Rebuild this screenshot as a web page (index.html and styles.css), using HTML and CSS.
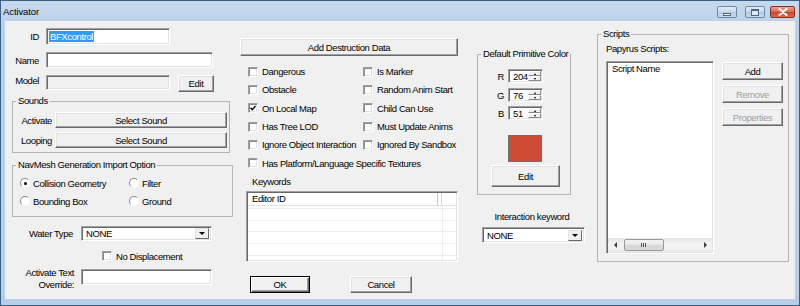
FILE: index.html
```html
<!DOCTYPE html>
<html>
<head>
<meta charset="utf-8">
<title>Activator</title>
<link rel="stylesheet" href="styles.css">
</head>
<body>
<div class="window">
  <div class="titlebar">
    <span class="title">Activator</span>
    <div class="caption">
      <span class="cbtn cmin"><span class="g-min"></span></span>
      <span class="cbtn cmax"><span class="g-max"></span></span>
      <span class="cbtn cclose"><svg width="10" height="8" viewBox="0 0 10 8"><path d="M1.5 1 L8.5 7 M8.5 1 L1.5 7" stroke="#fff" stroke-width="2" stroke-linecap="round"/></svg></span>
    </div>
  </div>
  <div class="client">
    <div class="col-left">
      <div class="row r-id"><span class="lbl">ID</span><div class="field f-id"><span class="sel">BFXcontrol</span></div></div>
      <div class="row r-name"><span class="lbl">Name</span><div class="field f-name"></div></div>
      <div class="row r-model"><span class="lbl">Model</span><div class="field f-model disabled"></div><div class="btn b-edit">Edit</div></div>
      <fieldset class="group g-sounds">
        <legend>Sounds</legend>
        <div class="row s-row"><span class="slbl">Activate</span><div class="btn b-sound">Select Sound</div></div>
        <div class="row s-row s2"><span class="slbl">Looping</span><div class="btn b-sound">Select Sound</div></div>
      </fieldset>
      <fieldset class="group g-nav">
        <legend>NavMesh Generation Import Option</legend>
        <div class="radios">
          <div class="opt"><span class="rb on"></span>Collision Geometry</div>
          <div class="opt"><span class="rb"></span>Filter</div>
          <div class="opt"><span class="rb"></span>Bounding Box</div>
          <div class="opt"><span class="rb"></span>Ground</div>
        </div>
      </fieldset>
      <div class="row r-water"><span class="wlbl">Water Type</span><div class="field combo f-water"><span class="cval">NONE</span><span class="dd"></span></div></div>
      <div class="row r-nodisp"><span class="cb"></span><span>No Displacement</span></div>
      <div class="row r-override"><span class="wlbl two">Activate Text<br>Override:</span><div class="field f-override"></div></div>
    </div>

    <div class="col-mid">
      <div class="btn b-destr">Add Destruction Data</div>
      <div class="checks">
        <div class="chk"><span class="cb"></span>Dangerous</div>
        <div class="chk"><span class="cb"></span>Is Marker</div>
        <div class="chk"><span class="cb"></span>Obstacle</div>
        <div class="chk"><span class="cb"></span>Random Anim Start</div>
        <div class="chk"><span class="cb checked"><svg width="6" height="6" viewBox="0 0 6 6"><path d="M0.5 2.8 L2.2 4.6 L5.6 0.9" fill="none" stroke="#000" stroke-width="1.4"/></svg></span>On Local Map</div>
        <div class="chk"><span class="cb"></span>Child Can Use</div>
        <div class="chk"><span class="cb"></span>Has Tree LOD</div>
        <div class="chk"><span class="cb"></span>Must Update Anims</div>
        <div class="chk"><span class="cb"></span>Ignore Object Interaction</div>
        <div class="chk"><span class="cb"></span>Ignored By Sandbox</div>
        <div class="chk wide"><span class="cb"></span>Has Platform/Language Specific Textures</div>
      </div>
      <div class="kw-label">Keywords</div>
      <div class="kw-list">
        <div class="kw-head"><span class="kh1">Editor ID</span><span class="kh2"></span></div>
        <div class="kw-body"></div>
      </div>
      <div class="okrow"><div class="btn b-ok">OK</div><div class="btn b-cancel">Cancel</div></div>
    </div>

    <div class="col-color">
      <fieldset class="group g-color">
        <legend>Default Primitive Color</legend>
        <div class="row spin-row"><span class="clbl">R</span><div class="field spin"><span class="sval">204</span><span class="spinner"><span class="sp up"></span><span class="sp dn"></span></span></div></div>
        <div class="row spin-row sg"><span class="clbl">G</span><div class="field spin"><span class="sval">76</span><span class="spinner"><span class="sp up"></span><span class="sp dn"></span></span></div></div>
        <div class="row spin-row sb"><span class="clbl">B</span><div class="field spin"><span class="sval">51</span><span class="spinner"><span class="sp up"></span><span class="sp dn"></span></span></div></div>
        <div class="swatch"></div>
        <div class="btn b-cedit">Edit</div>
      </fieldset>
      <div class="ik-label">Interaction keyword</div>
      <div class="field combo f-ik"><span class="cval">NONE</span><span class="dd"></span></div>
    </div>

    <div class="col-scripts">
      <fieldset class="group g-scripts">
        <legend>Scripts</legend>
        <div class="pap">Papyrus Scripts:</div>
        <div class="sc-wrap">
          <div class="sc-list">
            <div class="sc-head">Script Name</div>
            <div class="sc-body"></div>
            <div class="hscroll">
              <span class="sarrow aleft"></span>
              <span class="thumb"><span class="grip"></span></span>
              <span class="strack"></span>
              <span class="sarrow aright"></span>
            </div>
          </div>
          <div class="sc-btns">
            <div class="btn b-sc">Add</div>
            <div class="btn b-sc dis">Remove</div>
            <div class="btn b-sc dis">Properties</div>
          </div>
        </div>
      </fieldset>
    </div>
  </div>
</div>
</body>
</html>
```

FILE: styles.css
```css
* { box-sizing: border-box; }

html, body { margin: 0; padding: 0; }

body {
  width: 800px;
  height: 306px;
  overflow: hidden;
  font-family: "Liberation Sans", Arial, sans-serif;
  font-size: 9.5px;
  letter-spacing: -0.4px;
  color: #000;
  background: #b9d1ea;
}

.window {
  width: 800px;
  height: 306px;
  border: 1px solid #3c5f84;
  background: linear-gradient(#c7d9ee, #b9cfe8 30px, #b7cee8);
  display: flex;
  flex-direction: column;
}

/* title bar */
.titlebar {
  height: 20px;
  display: flex;
  align-items: flex-start;
  padding: 0 4px 0 2px;
  flex: none;
}
.title {
  font-size: 9.5px;
  letter-spacing: -0.1px;
  line-height: 12px;
  margin-top: 5px;
}
.caption {
  margin-left: auto;
  display: flex;
  margin-top: 5px;
}
.cbtn {
  height: 12px;
  border: 1px solid #6d87a6;
  border-radius: 2px;
  display: flex;
  align-items: center;
  justify-content: center;
  background: linear-gradient(#e3ecf6, #c8d8ea 50%, #b6c9df 51%, #c9d9ea);
}
.cmin { width: 20px; }
.cmax { width: 20px; margin-left: 8px; }
.cclose {
  width: 25px;
  margin-left: 5px;
  border-color: #8a3325;
  background: linear-gradient(#e8a493, #d9664c 50%, #c7452c 51%, #d86a50);
}
.g-min {
  width: 8px;
  height: 3px;
  background: #fff;
  border: 1px solid #4d6584;
  margin-top: 4px;
}
.g-max {
  width: 8px;
  height: 7px;
  border: 1px solid #4d6584;
  border-top-width: 2px;
  background: #dfe8f3;
}

/* client */
.client {
  flex: none;
  height: 278px;
  margin: 0 4px;
  background: #f0f0f0;
  display: flex;
  align-items: flex-start;
}

.row { display: flex; align-items: center; }

/* common controls */
.field {
  background: #fff;
  border: 1px solid;
  border-color: #a0a0a0 #fff #fff #a0a0a0;
  box-shadow: inset 1px 1px 0 #696969, inset -1px -1px 0 #e3e3e3;
  flex: none;
}
.field.disabled { background: #f0f0f0; }

.btn {
  display: flex;
  align-items: center;
  justify-content: center;
  background: #f0f0f0;
  border: 1px solid;
  border-color: #fff #696969 #696969 #fff;
  box-shadow: inset -1px -1px 0 #a0a0a0, inset 1px 1px 0 #e3e3e3;
  flex: none;
  white-space: nowrap;
}

.cb {
  width: 10px;
  height: 10px;
  flex: none;
  background: #fff;
  border: 1px solid;
  border-color: #a0a0a0 #fff #fff #a0a0a0;
  box-shadow: inset 1px 1px 0 #8a8a8a, inset -1px -1px 0 #e3e3e3;
  display: flex;
  align-items: center;
  justify-content: center;
}
.cb svg { display: block; }

.group {
  margin: 0;
  padding: 0;
  min-width: 0;
  border: 1px solid #b4b4b4;
  border-radius: 0;
}
.group legend {
  padding: 0 2px;
  margin-left: 3px;
  line-height: 12px;
}

/* left column */
.col-left {
  width: 231px;
  flex: none;
  padding-top: 7px;
}
.lbl {
  width: 34px;
  margin-right: 7px;
  text-align: right;
}
.f-id { width: 124px; height: 17px; padding: 2px 0 0 2px; }
.sel {
  display: inline-block;
  background: #3399ff;
  color: #fff;
  line-height: 11px;
  padding: 0 1px;
}
.r-name { margin-top: 7px; }
.f-name { width: 167px; height: 16px; }
.r-model { margin-top: 7px; align-items: flex-start; }
.f-model { width: 124px; height: 15px; }
.b-edit { width: 36px; height: 17px; margin-left: 8px; }

.g-sounds { width: 218px; margin: 3px 0 0 7px; padding-bottom: 4px; }
.s-row { margin-top: 5px; }
.s-row.s2 { margin-top: 4px; }
.slbl { width: 39px; margin-right: 3px; text-align: right; }
.b-sound { width: 172px; height: 16px; }

.g-nav { width: 221px; margin: 6px 0 0 7px; padding-bottom: 9px; }
.radios {
  display: grid;
  grid-template-columns: 109px auto;
  grid-auto-rows: 12px;
  row-gap: 6px;
  margin-top: 6px;
  padding-left: 7px;
}
.opt { display: flex; align-items: center; }
.rb {
  width: 10px;
  height: 10px;
  border-radius: 50%;
  margin-right: 3px;
  border: 1px solid;
  border-color: #8c8c8c #f8f8f8 #f8f8f8 #8c8c8c;
  background: #fff;
  display: flex;
  align-items: center;
  justify-content: center;
}
.rb.on::after {
  content: "";
  width: 3px;
  height: 3px;
  border-radius: 50%;
  background: #000;
}

.r-water { margin-top: 9px; }
.wlbl { width: 68px; margin-right: 8px; text-align: right; }
.combo { display: flex; align-items: center; padding: 0 2px 0 4px; }
.cval { flex: 1; }
.dd {
  width: 14px;
  height: 11px;
  background: #f0f0f0;
  border: 1px solid;
  border-color: #e3e3e3 #696969 #696969 #e3e3e3;
  display: flex;
  align-items: center;
  justify-content: center;
}
.dd::after {
  content: "";
  border-left: 3px solid transparent;
  border-right: 3px solid transparent;
  border-top: 3px solid #000;
}
.f-water { width: 131px; height: 15px; }

.r-nodisp { margin-top: 9px; height: 12px; padding-left: 97px; }
.r-nodisp .cb { margin-right: 4px; }

.r-override { margin-top: 5px; align-items: flex-start; }
.wlbl.two { width: 69px; margin-right: 7px; line-height: 12px; }
.f-override { width: 131px; height: 16px; margin-top: 2px; }

/* middle column */
.col-mid {
  width: 218px;
  flex: none;
  margin-left: 4px;
  padding-top: 17px;
}
.b-destr { width: 218px; height: 18px; }
.checks {
  display: grid;
  grid-template-columns: 115px auto;
  grid-auto-rows: 18.3px;
  margin-top: 6.5px;
  padding-left: 8px;
}
.chk { display: flex; align-items: center; white-space: nowrap; }
.chk .cb { margin-right: 4px; }
.chk.wide { grid-column: 1 / 3; }

.kw-label { margin-top: 4px; padding-left: 12px; line-height: 12px; }
.kw-list {
  margin: 3px 0 0 6px;
  width: 212px;
  height: 71px;
  background: #fff;
  border: 1px solid;
  border-color: #a0a0a0 #fff #fff #a0a0a0;
  box-shadow: inset 1px 1px 0 #696969, inset -1px -1px 0 #e3e3e3;
  padding: 1px 1px 1px 1px;
  display: flex;
  flex-direction: column;
}
.kw-head {
  height: 13px;
  display: flex;
  border-bottom: 1px solid #e3e3e3;
  flex: none;
}
.kh1 {
  width: 190px;
  padding-left: 4px;
  line-height: 12px;
  border-right: 1px solid #c8c8c8;
}
.kh2 { width: 4px; border-right: 1px solid #d8d8d8; }
.kw-body {
  flex: 1;
  background:
    linear-gradient(to right, transparent 194px, #ececec 194px, #ececec 195px, transparent 195px),
    repeating-linear-gradient(to bottom, transparent 0, transparent 2px, #ececec 2px, #ececec 3px, transparent 3px, transparent 11.7px);
}

.okrow { display: flex; margin-top: 14px; padding-left: 10px; }
.b-ok {
  width: 60px;
  height: 17px;
  border-color: #000;
  box-shadow: inset 1px 1px 0 #fff, inset -1px -1px 0 #696969, inset -2px -2px 0 #a0a0a0;
}
.b-cancel { width: 62px; height: 17px; margin-left: 40px; }

/* color column */
.col-color {
  width: 110px;
  flex: none;
  margin-left: 19px;
  padding-top: 27px;
}
.g-color { width: 94px; padding-bottom: 7px; }
.g-color legend { white-space: nowrap; }
.spin-row { margin-top: 9px; }
.spin-row.sg { margin-top: 5px; }
.spin-row.sb { margin-top: 4px; }
.clbl { width: 26px; margin-right: 4px; text-align: right; }
.spin {
  width: 35px;
  height: 14px;
  display: flex;
  align-items: stretch;
  padding: 1px 1px 1px 4px;
}
.sval { flex: 1; line-height: 11px; }
.spinner {
  width: 13px;
  display: flex;
  flex-direction: column;
}
.sp {
  flex: 1;
  background: #f0f0f0;
  border: 1px solid;
  border-color: #fff #8a8a8a #8a8a8a #fff;
  display: flex;
  align-items: center;
  justify-content: center;
}
.sp.up::after {
  content: "";
  border-left: 1.5px solid transparent;
  border-right: 1.5px solid transparent;
  border-bottom: 2px solid #000;
}
.sp.dn::after {
  content: "";
  border-left: 1.5px solid transparent;
  border-right: 1.5px solid transparent;
  border-top: 2px solid #000;
}
.swatch {
  width: 34px;
  height: 27px;
  margin: 15px 0 0 30px;
  background: #cc4c33;
  border: 1px solid #6e6e6e;
}
.b-cedit { width: 69px; height: 22px; margin: 3px 0 0 13px; }

.ik-label { margin-top: 16px; text-align: center; line-height: 12px; white-space: nowrap; }
.f-ik { width: 103px; height: 16px; margin: 4px 0 0 5px; }

/* scripts column */
.col-scripts {
  width: 192px;
  flex: none;
  margin-left: 10px;
  padding-top: 7px;
}
.g-scripts { width: 192px; padding-bottom: 7px; }
.pap { margin-top: 3px; padding-left: 8px; line-height: 12px; }
.sc-wrap { display: flex; align-items: flex-start; margin-top: 6px; padding-left: 8px; }
.sc-list {
  width: 108px;
  height: 193px;
  background: #fff;
  border: 1px solid;
  border-color: #a0a0a0 #fff #fff #a0a0a0;
  box-shadow: inset 1px 1px 0 #696969, inset -1px -1px 0 #e3e3e3;
  padding: 1px;
  display: flex;
  flex-direction: column;
}
.sc-head { height: 12px; line-height: 12px; padding-left: 4px; flex: none; }
.sc-body { flex: 1; }
.hscroll {
  height: 14px;
  flex: none;
  display: flex;
  align-items: center;
  background: linear-gradient(#e6e6e6, #f2f2f2 40%, #f2f2f2 70%, #e9e9e9);
  padding: 0 2px;
}
.sarrow { width: 10px; height: 14px; display: flex; align-items: center; justify-content: center; }
.sarrow.aleft::after {
  content: "";
  border-top: 3px solid transparent;
  border-bottom: 3px solid transparent;
  border-right: 3px solid #3c3c3c;
}
.sarrow.aright::after {
  content: "";
  border-top: 3px solid transparent;
  border-bottom: 3px solid transparent;
  border-left: 3px solid #3c3c3c;
}
.thumb {
  width: 40px;
  height: 12px;
  margin-left: 4px;
  border: 1px solid #9a9a9a;
  border-radius: 2px;
  background: linear-gradient(#f4f4f4, #e6e6e6 50%, #d6d6d6 51%, #dadada);
  display: flex;
  align-items: center;
  justify-content: center;
}
.grip {
  width: 6px;
  height: 4px;
  background: repeating-linear-gradient(to right, #555 0, #555 1px, transparent 1px, transparent 2px);
}
.strack { flex: 1; }

.sc-btns { display: flex; flex-direction: column; margin-left: 8px; padding-top: 1px; }
.b-sc { width: 61px; height: 18px; }
.b-sc + .b-sc { margin-top: 5px; }
.b-sc.dis { color: #a0a0a0; }
```
